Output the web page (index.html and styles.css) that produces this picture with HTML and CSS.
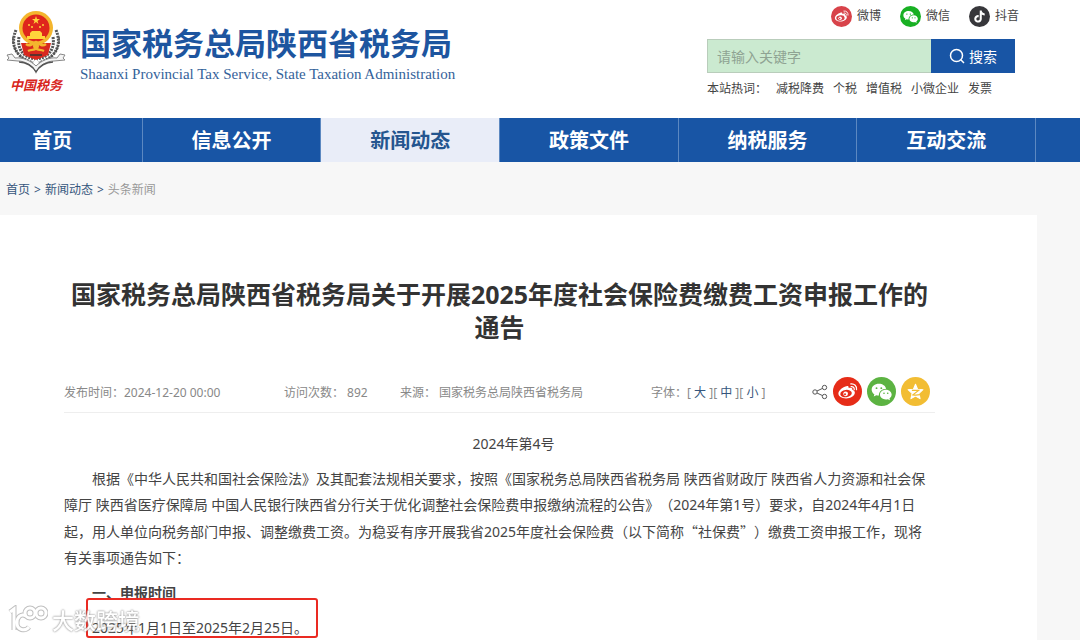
FILE: index.html
```html
<!DOCTYPE html>
<html lang="zh-CN">

<head>
    <meta charset="UTF-8">
    <meta name="viewport" content="width=device-width, initial-scale=1.0">
    <title>国家税务总局陕西省税务局</title>
    <link rel="stylesheet" href="styles.css">
</head>

<body>
    <!-- Shared icons -->
    <svg class="sprite" aria-hidden="true">
        <symbol id="weibo" viewBox="0 0 28 28">
            <path fill="#fff" d="M12 9.200c1.800-.9 3.500-.6 3.100 1.500 2-.8 4.200-.4 3.500 1.700 1.600.5 2.600 1.500 2.500 2.900-.2 3-4.100 5.400-8.500 5.400-4.200 0-7.400-1.900-7.400-4.700 0-2.700 3.300-5.700 6.800-6.800z" />
            <ellipse class="weibo-ring" cx="12.600" cy="16" rx="5.600" ry="3.600" transform="rotate(-8 12.600 16)" />
            <circle cx="12.200" cy="16.200" r="2.300" fill="#fff" />
            <circle class="weibo-dot" cx="11.600" cy="16.700" r="1" />
            <path fill="none" stroke="#fff" stroke-width="1.200" stroke-linecap="round" d="M17.500 9.300c1.800-.2 3.200 1 3 2.900M17.200 6.700c3.400-.5 6 2.100 5.500 5.500" />
        </symbol>
        <symbol id="wechat" viewBox="0 0 28 28">
            <path fill="#fff" d="M11.500 6.500c-4 0-7 2.500-7 5.700 0 1.800 1 3.400 2.600 4.500l-.6 2.100 2.500-1.300c.8.2 1.600.4 2.500.4-.3-3.700 2.900-6.600 7-6.600-.6-2.800-3.500-4.800-7-4.800z" />
            <path fill="#fff" d="M18.200 12.200c-3.300 0-5.700 2.100-5.700 4.800s2.400 4.700 5.700 4.700c.7 0 1.300-.1 1.900-.3l2.100 1.100-.5-1.800c1.300-.9 2.100-2.200 2.100-3.700 0-2.700-2.400-4.800-5.600-4.800z" />
            <g class="wechat-eyes">
                <circle cx="9.200" cy="10.800" r=".9" />
                <circle cx="13.800" cy="10.800" r=".9" />
                <circle cx="16.400" cy="15.700" r=".8" />
                <circle cx="20" cy="15.700" r=".8" />
            </g>
        </symbol>
    </svg>

    <header class="header">
        <a class="brand" href="#">
            <span class="emblem">
                <svg viewBox="0 0 60 64" aria-hidden="true">
                    <!-- wheat and gear -->
                    <g fill="none" stroke="#555" stroke-width="3">
                        <path stroke-dasharray="2 1" d="M10 20C4 34 9 47 27 53M50 20c6 14 1 27-17 33" />
                        <path stroke-dasharray="2 1" d="M13 27c-2 12 4 20 16 22M47 27c2 12-4 20-16 22" />
                        <path stroke-dasharray="3 1" stroke-width="1.500" d="M7 27c-1 13 7 22 21 28M53 27c1 13-7 22-21 28" />
                    </g>
                    <path fill="#d7281f" d="M15 33h30l-3 12-12 5-12-5z" />
                    <!-- banner -->
                    <path fill="#f4f4f4" stroke="#888" d="M1 45l5-1 3 4c8-1 16 3 21 8 5-5 13-9 21-8l3-4 5 1-2 3 2 2-11 1c-7 0-14 4-18 11-4-7-11-11-18-11L1 50l2-2z" />
                    <path fill="none" stroke="#555" stroke-width="1.500" d="M13 52c7 0 14 4 17 10 3-6 10-10 17-10" />
                    <circle cx="30" cy="18" r="17" fill="#f4b62e" />
                    <circle cx="30" cy="18" r="13.500" fill="#df261c" />
                    <path fill="#ffd53b" d="M30 6l1 3h3l-2.500 2 1 3-2.500-2-2.500 2 1-3L26 9h3z" />
                    <g fill="#ffd53b">
                        <circle cx="23" cy="15" r="1" />
                        <circle cx="26" cy="17" r="1" />
                        <circle cx="34" cy="17" r="1" />
                        <circle cx="37" cy="15" r="1" />
                        <path d="M24 23l2-2h8l2 2v3h3v3H21v-3h3z" />
                    </g>
                    <path fill="none" stroke="#f4b62e" stroke-width="2.400" d="M20 34c4 3 7 0 10-2 3 2 6 5 10 2M22 41c4-2 6 0 8-3 2 3 4 1 8 3" />
                    <circle cx="30" cy="36" r="3" fill="#f4b62e" />
                    <path stroke="#333" stroke-width="1.500" d="M24 45h12" />
                </svg>
                <span class="emblem-text">中国税务</span>
            </span>
            <span class="brand-names">
                <span class="brand-cn">国家税务总局陕西省税务局</span>
                <span class="brand-en">Shaanxi Provincial Tax Service, State Taxation Administration</span>
            </span>
        </a>

        <div class="tools">
            <div class="social">
                <a href="#"><svg class="dot dot-weibo"><use href="#weibo" /></svg>微博</a>
                <a href="#"><svg class="dot dot-wechat"><use href="#wechat" /></svg>微信</a>
                <a href="#"><svg class="dot dot-douyin" viewBox="-9 -9 42 42"><path fill="#fff" d="M12.525.02c1.310-.02 2.610-.01 3.910-.02.08 1.530.63 3.090 1.750 4.170 1.120 1.110 2.700 1.620 4.240 1.790v4.030c-1.440-.05-2.890-.35-4.200-.97-.57-.26-1.100-.59-1.620-.93-.01 2.920.01 5.840-.02 8.750-.08 1.400-.54 2.790-1.350 3.940-1.310 1.920-3.580 3.170-5.910 3.210-1.430.08-2.860-.31-4.080-1.030-2.020-1.190-3.440-3.370-3.650-5.710-.02-.5-.03-1-.01-1.490.18-1.900 1.120-3.720 2.580-4.960 1.660-1.440 3.980-2.130 6.150-1.720.02 1.480-.04 2.960-.04 4.440-.99-.32-2.150-.23-3.020.37-.63.41-1.110 1.040-1.360 1.750-.21.51-.15 1.070-.14 1.610.24 1.640 1.820 3.020 3.500 2.870 1.120-.01 2.190-.66 2.770-1.610.19-.33.4-.67.41-1.060.1-1.790.06-3.570.07-5.360.01-4.030-.01-8.050.02-12.070z" /></svg>抖音</a>
            </div>
            <form class="search">
                <input type="text" aria-label="请输入关键字" placeholder="请输入关键字">
                <button type="submit">
                    <svg width="16" height="16" viewBox="0 0 16 16" aria-hidden="true">
                        <circle cx="7.500" cy="7.500" r="6" fill="none" stroke="#fff" stroke-width="1.500" />
                        <path stroke="#fff" stroke-width="1.500" d="M11.800 11.800l3.200 3.200" />
                    </svg>搜索</button>
            </form>
            <div class="hotwords">
                <span>本站热词：</span>
                <a href="#">减税降费</a>
                <a href="#">个税</a>
                <a href="#">增值税</a>
                <a href="#">小微企业</a>
                <a href="#">发票</a>
            </div>
        </div>
    </header>

    <nav class="nav">
        <a class="home" href="#">首页</a>
        <a href="#">信息公开</a>
        <a class="active" href="#">新闻动态</a>
        <a href="#">政策文件</a>
        <a href="#">纳税服务</a>
        <a href="#">互动交流</a>
    </nav>

    <div class="breadcrumb">
        <a href="#">首页</a>
        <span>&gt;</span>
        <a href="#">新闻动态</a>
        <span>&gt;</span>
        <span class="current">头条新闻</span>
    </div>

    <main class="article">
        <h1>国家税务总局陕西省税务局关于开展2025年度社会保险费缴费工资申报工作的通告</h1>

        <div class="meta">
            <span>发布时间：2024-12-20 00:00</span>
            <span>访问次数： 892</span>
            <span>来源： 国家税务总局陕西省税务局</span>
            <span>字体：[ <a href="#">大</a> ][ <a href="#">中</a> ][ <a href="#">小</a> ]</span>
            <span class="share">
                <svg width="16" height="16" viewBox="0 0 16 16" fill="none" stroke="#555" aria-hidden="true">
                    <circle cx="3" cy="8" r="2.200" />
                    <circle cx="12.500" cy="3.500" r="2.200" />
                    <circle cx="12.500" cy="12.500" r="2.200" />
                    <path d="M5 7l5.500-2.600M5 9l5.500 2.600" />
                </svg>
                <a href="#" aria-label="微博"><svg class="badge badge-weibo"><use href="#weibo" /></svg></a>
                <a href="#" aria-label="微信"><svg class="badge badge-wechat"><use href="#wechat" /></svg></a>
                <a href="#" aria-label="QQ空间"><svg class="badge badge-qzone" viewBox="0 0 28 28">
                        <path fill="#fff" stroke="#fff" stroke-linejoin="round" d="M14 7l2 4.800 5.200.5-3.900 3.500 1.100 5.100-4.400-2.600-4.400 2.600 1.100-5.100-3.900-3.500 5.200-.5z" />
                        <path fill="none" stroke="#f2bd33" stroke-width="1.200" d="M10.500 13h6.500l-5.500 4.200c2 .4 4 .4 7-.2" />
                    </svg></a>
            </span>
        </div>

        <div class="content">
            <p class="number">2024年第4号</p>
            <p>根据《中华人民共和国社会保险法》及其配套法规相关要求，按照《国家税务总局陕西省税务局 陕西省财政厅 陕西省人力资源和社会保障厅 陕西省医疗保障局 中国人民银行陕西省分行关于优化调整社会保险费申报缴纳流程的公告》（2024年第1号）要求，自2024年4月1日起，用人单位向税务部门申报、调整缴费工资。为稳妥有序开展我省2025年度社会保险费（以下简称<span class="quoted">“社保费”</span>）缴费工资申报工作，现将有关事项通告如下：</p>
            <h2>一、申报时间</h2>
            <p><span class="marked">2025年1月1日至2025年2月25日。</span></p>
        </div>
    </main>

    <div class="watermark">
        <svg width="40" height="30" viewBox="0 0 40 30" aria-hidden="true">
            <g class="mark-edge">
                <path d="M2 7l4-3v21M18 11c-5-3-9 1-9 7 0 7 8 9 12 4" />
                <circle cx="22" cy="8" r="5" />
                <circle cx="33" cy="8" r="5" />
            </g>
            <g class="mark-line">
                <path d="M2 7l4-3v21M18 11c-5-3-9 1-9 7 0 7 8 9 12 4" />
                <circle cx="22" cy="8" r="5" />
                <circle cx="33" cy="8" r="5" />
            </g>
        </svg>
        <span>大数跨境</span>
    </div>
</body>

</html>
```
FILE: styles.css
```css
* {
    box-sizing: border-box;
}

body {
    margin: 0;
    font-family: "Noto Sans", "Noto Sans CJK SC", sans-serif;
    font-size: 12px;
    text-spacing-trim: space-all;
    color: #444;
    background-color: #f7f7f7;
}

a {
    color: inherit;
    text-decoration: none;
}

.sprite {
    display: none;
}

/* Header */
.header {
    display: flex;
    justify-content: space-between;
    height: 118px;
    padding: 5px 61px 0 6px;
    background-color: #fff;
}

.brand {
    display: flex;
    gap: 14px;
    padding-top: 4px;
}

.emblem {
    display: flex;
    flex-direction: column;
    align-items: center;
    width: 60px;
}

.emblem svg {
    width: 60px;
    height: 66px;
    flex: none;
}

.emblem-text {
    font-family: "Liberation Serif", "Noto Sans CJK SC", serif;
    font-size: 13px;
    font-style: italic;
    font-weight: bold;
    line-height: 22px;
    color: #d8261c;
}

.brand-names {
    display: flex;
    flex-direction: column;
    padding-top: 14px;
}

.brand-cn {
    font-size: 31px;
    font-weight: bold;
    line-height: 40px;
    color: #1d559f;
}

.brand-en {
    font-family: "Liberation Serif", serif;
    font-size: 15px;
    line-height: 22px;
    color: #34629a;
}

.tools {
    width: 312px;
}

.social {
    display: flex;
    justify-content: flex-end;
    gap: 19px;
}

.social a {
    display: flex;
    align-items: center;
    gap: 5px;
    line-height: 22px;
}

.dot {
    width: 21px;
    height: 21px;
    border-radius: 50%;
}

.dot-weibo {
    background-color: #d8434a;
    color: #d8434a;
}

.dot-wechat {
    background-color: #18b023;
    color: #18b023;
}

.dot-douyin {
    background-color: #37373b;
}

.weibo-ring {
    fill: currentColor;
}

.weibo-dot,
.wechat-eyes {
    fill: currentColor;
}

.search {
    display: flex;
    height: 34px;
    margin: 12px 4px 0 0;
}

.search input {
    flex: 1;
    min-width: 0;
    padding: 0 9px;
    border: 1px solid #b9cdbb;
    border-right: none;
    font: inherit;
    font-size: 14px;
    background-color: #cbead0;
}

.search input::placeholder {
    color: #8fa393;
}

.search button {
    display: flex;
    align-items: center;
    justify-content: center;
    gap: 4px;
    width: 84px;
    border: none;
    font: inherit;
    font-size: 14px;
    color: #fff;
    background-color: #1855a5;
    cursor: pointer;
}

.hotwords {
    display: flex;
    gap: 9px;
    margin-top: 6px;
    line-height: 20px;
}

/* Navigation */
.nav {
    display: grid;
    grid-template-columns: 143fr repeat(5, 179fr) 44fr;
    background-color: #1855a5;
}

.nav a {
    padding-top: 2px;
    border-right: 1px solid #5c88c1;
    font-size: 20px;
    font-weight: bold;
    line-height: 42px;
    text-align: center;
    color: #fff;
}

.nav .home {
    padding-right: 37px;
}

.nav .active {
    color: #24558f;
    background-color: #e9edf8;
}

/* Breadcrumb */
.breadcrumb {
    display: flex;
    gap: 4px;
    padding: 18px 6px 15px;
    line-height: 20px;
    color: #35557c;
}

.breadcrumb .current {
    color: #999;
}

/* Article */
.article {
    margin-right: 43px;
    padding: 63px 102px 0 64px;
    background-color: #fff;
}

h1 {
    margin: 0;
    font-size: 25px;
    line-height: 33px;
    text-align: center;
    color: #333;
}

.meta {
    display: grid;
    grid-template-columns: 220fr 116fr 251fr 161fr 123fr;
    align-items: center;
    margin-top: 33px;
    padding-bottom: 6px;
    border-bottom: 1px solid #eee;
    line-height: 20px;
    white-space: nowrap;
    color: #888;
}

.meta > span {
    padding-top: 2px;
}

.meta a {
    color: #35557c;
}

.meta .share {
    display: flex;
    align-items: center;
    gap: 5px;
    padding-top: 0;
}

.share a {
    display: flex;
}

.badge {
    width: 29px;
    height: 29px;
    border-radius: 50%;
}

.share .badge-weibo {
    background-color: #e62c18;
    color: #e62c18;
}

.share .badge-wechat {
    background-color: #5cb342;
    color: #5cb342;
}

.badge-qzone {
    background-color: #f2bd33;
}

.content {
    padding-top: 9px;
    font-size: 14px;
    line-height: 26px;
}

.content p,
.content h2 {
    margin: 9px 0 0;
    text-indent: 2em;
}

.content h2 {
    font-size: 14px;
}

.content .number {
    text-align: center;
}

/* Full-width quote marks */
.quoted {
    font-family: "Noto Sans CJK SC", sans-serif;
}

/* Red frame over the dates */
.marked {
    position: relative;
}

.marked::after {
    content: "";
    position: absolute;
    top: -20px;
    right: -10px;
    bottom: -1px;
    left: -6px;
    border: 2px solid #ea2a22;
    border-radius: 3px;
}

/* Watermark */
.watermark {
    position: fixed;
    bottom: 4px;
    left: 8px;
    display: flex;
    align-items: center;
    gap: 4px;
    font-size: 22px;
    font-weight: 500;
    line-height: 32px;
    color: #fff;
    text-shadow: 0 0 2px #888, 0 0 2px #999;
    opacity: 0.85;
}

.mark-edge,
.mark-line {
    fill: none;
    stroke: #b5b5b5;
    stroke-width: 5;
}

.mark-line {
    stroke: #fff;
    stroke-width: 3;
}
```
